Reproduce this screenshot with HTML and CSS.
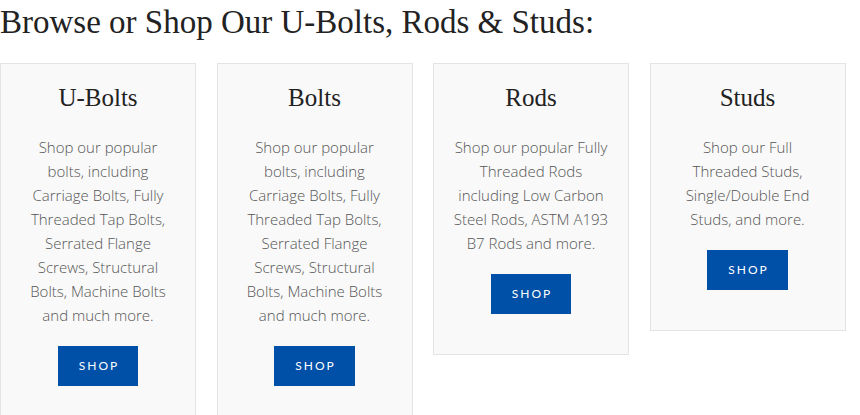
FILE: index.html
```html
<!DOCTYPE html>
<html>
<head>
  <meta charset="utf-8">
  <title>U-Bolts, Rods &amp; Studs</title>
  <link rel="stylesheet" href="styles.css">
</head>
<body>
  <h2 class="browse-title">Browse or Shop Our U-Bolts, Rods &amp; Studs:</h2>
  <div class="cards">
    <div class="card">
      <h3>U-Bolts</h3>
      <p>Shop our popular bolts, including Carriage Bolts, Fully Threaded Tap Bolts, Serrated Flange Screws, Structural Bolts, Machine Bolts and much more.</p>
      <a class="shop-btn" href="#">Shop</a>
    </div>
    <div class="card">
      <h3>Bolts</h3>
      <p>Shop our popular bolts, including Carriage Bolts, Fully Threaded Tap Bolts, Serrated Flange Screws, Structural Bolts, Machine Bolts and much more.</p>
      <a class="shop-btn" href="#">Shop</a>
    </div>
    <div class="card">
      <h3>Rods</h3>
      <p>Shop our popular Fully Threaded Rods including Low Carbon Steel Rods, ASTM A193 B7 Rods and more.</p>
      <a class="shop-btn" href="#">Shop</a>
    </div>
    <div class="card">
      <h3>Studs</h3>
      <p>Shop our Full Threaded Studs, Single/Double End Studs, and more.</p>
      <a class="shop-btn" href="#">Shop</a>
    </div>
  </div>
</body>
</html>
```

FILE: styles.css
```css
body {
  margin: 0;
  padding: 0;
  background: #ffffff;
  font-family: "Open Sans", sans-serif;
}
.browse-title {
  font-family: "Liberation Serif", serif;
  font-weight: normal;
  font-size: 33px;
  line-height: 44px;
  color: #222222;
  margin: 0 0 19px 0;
}
.cards {
  display: flex;
  align-items: flex-start;
  gap: 20.5px;
}
.card {
  width: 196px;
  box-sizing: border-box;
  background: #f9f9f9;
  border: 1px solid #e4e4e4;
  padding: 20px 19px 40px;
  text-align: center;
}
.card h3 {
  font-family: "Liberation Serif", serif;
  font-weight: normal;
  font-size: 25px;
  line-height: 28px;
  color: #222222;
  margin: 0 0 23px 0;
}
.card p {
  font-weight: 300;
  font-size: 15px;
  line-height: 24px;
  color: #555555;
  margin: 0 0 19px 0;
}
.shop-btn {
  display: inline-block;
  background: #0050a8;
  color: #ffffff;
  text-decoration: none;
  text-transform: uppercase;
  font-family: "Lato", sans-serif;
  font-size: 12px;
  letter-spacing: 2px;
  line-height: 40px;
  padding: 0 19px 0 21px;
}
```
